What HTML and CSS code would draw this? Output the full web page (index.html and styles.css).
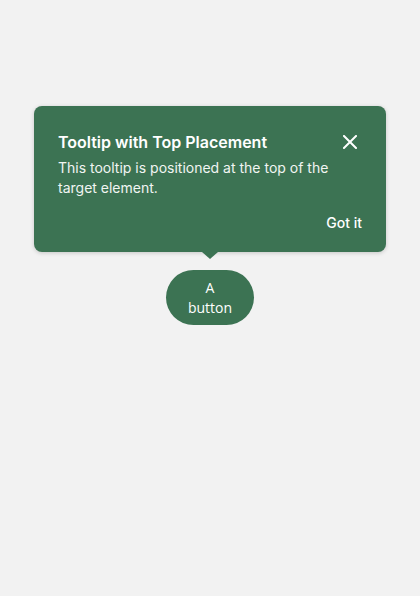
FILE: index.html
```html
<!DOCTYPE html>
<html>
<head>
<meta charset="utf-8">
<link rel="stylesheet" href="styles.css">
</head>
<body>
<div class="stage">
  <div class="tooltip" role="tooltip">
    <div class="tt-head">
      <div class="tt-title">Tooltip with Top Placement</div>
      <button class="tt-close" aria-label="Close">
        <svg width="14" height="14" viewBox="0 0 14 14"><path d="M1 1L13 13M13 1L1 13" stroke="#fff" stroke-width="2" stroke-linecap="square"/></svg>
      </button>
    </div>
    <div class="tt-body">This tooltip is positioned at the top of the target element.</div>
    <div class="tt-actions"><button class="tt-got">Got it</button></div>
    <span class="tt-arrow"></span>
  </div>
  <button class="target">A button</button>
</div>
</body>
</html>
```
FILE: styles.css
```css
html, body { margin: 0; padding: 0; }
body {
  background: #f2f2f2;
  width: 420px;
  height: 596px;
  font-family: Inter, Roboto, sans-serif;
}
.stage {
  display: flex;
  flex-direction: column;
  align-items: center;
  padding-top: 106px;
}
.tooltip {
  position: relative;
  box-sizing: border-box;
  width: 352px;
  height: 146px;
  background: #3c7353;
  color: #fff;
  border-radius: 8px;
  box-shadow: 0 1px 4px rgba(0,0,0,0.18);
  padding: 24px 24px 0 24px;
}
.tt-head {
  display: flex;
  align-items: center;
  justify-content: space-between;
  height: 24px;
}
.tt-title {
  font-family: Inter, sans-serif;
  font-size: 16px;
  font-weight: 600;
  line-height: 24px;
}
.tt-close {
  background: none;
  border: 0;
  padding: 0;
  width: 24px;
  height: 24px;
  display: flex;
  align-items: center;
  justify-content: center;
  cursor: pointer;
}
.tt-body {
  margin-top: 4px;
  font-size: 14px;
  line-height: 20px;
  color: #f1f5f2;
}
.tt-actions {
  display: flex;
  justify-content: flex-end;
  margin-top: 15px;
}
.tt-got {
  background: none;
  border: 0;
  padding: 0;
  color: #fff;
  font-family: Inter, sans-serif;
  font-size: 14px;
  font-weight: 500;
  line-height: 20px;
}
.tt-arrow {
  position: absolute;
  left: 50%;
  bottom: -7px;
  margin-left: -8px;
  width: 0;
  height: 0;
  border-left: 8px solid transparent;
  border-right: 8px solid transparent;
  border-top: 7px solid #3c7353;
}
.target {
  margin-top: 18px;
  box-sizing: border-box;
  width: 88px;
  height: 55px;
  border: 0;
  border-radius: 28px;
  background: #3c7353;
  color: #fff;
  font-family: "Open Sans", sans-serif;
  font-size: 14px;
  line-height: 20px;
  padding: 7px 20px;
}
```
